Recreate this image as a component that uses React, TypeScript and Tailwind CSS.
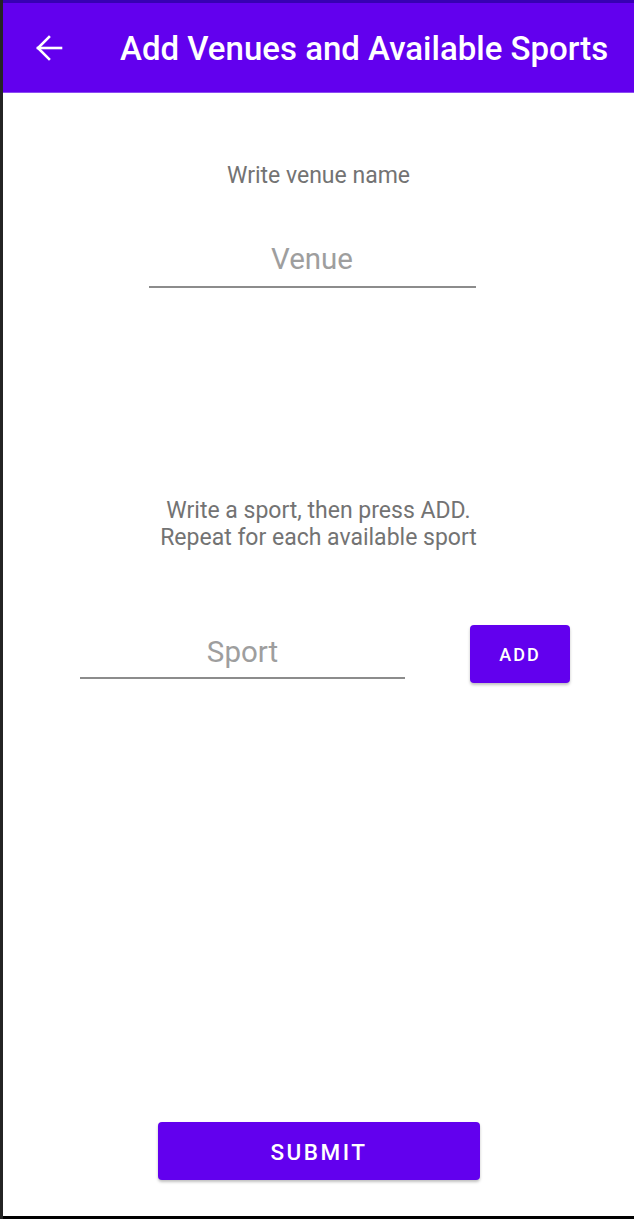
export default function App() {
  return (
    <div
      className="flex w-[634px] h-[1219px] overflow-hidden bg-white"
      style={{ fontFamily: "Roboto, 'Liberation Sans', sans-serif" }}
    >
      {/* left frame edge */}
      <div className="w-[3px] shrink-0 bg-[#242424]" />

      <div className="flex flex-1 flex-col">
        {/* status strip */}
        <div className="h-[3px] bg-[#3700b3]" />

        {/* App bar */}
        <header className="flex h-[90px] items-center bg-[#6200ee] border-b border-[#8b4cf2]">
          <button className="ml-[31px] flex h-[30px] w-[30px] items-center justify-center">
            <svg width="28" height="28" viewBox="0 0 28 28" fill="none" stroke="white" strokeWidth="2.6" strokeLinecap="square">
              <path d="M3 14H26" />
              <path d="M14 3L3 14L14 25" />
            </svg>
          </button>
          <h1 className="ml-[56px] mt-[2px] text-[33px] font-medium leading-none text-white">
            Add Venues and Available Sports
          </h1>
        </header>

        {/* Body */}
        <main className="flex flex-1 flex-col items-center">
          <p className="mt-[69px] text-[23px] leading-[28px] text-[#737373]">Write venue name</p>

          <input
            placeholder="Venue"
            className="mt-[48px] h-[50px] pb-[6px] w-[327px] border-b-2 border-[#8c8c8c] bg-transparent text-center text-[29.5px] text-[#333] placeholder:text-[#9e9e9e] outline-none ml-[-13px]"
          />

          <p className="mt-[209px] text-center text-[23px] leading-[27px] text-[#737373]">
            Write a sport, then press ADD.
            <br />
            Repeat for each available sport
          </p>

          <div className="mt-[74px] flex w-full items-end">
            <input
              placeholder="Sport"
              className="ml-[77px] h-[50px] pb-[2px] w-[325px] border-b-2 border-[#8c8c8c] bg-transparent text-center text-[29.5px] text-[#333] placeholder:text-[#9e9e9e] outline-none"
            />
            <button className="ml-[65px] mb-[-4px] flex h-[58px] w-[100px] items-center justify-center rounded-[4px] bg-[#6200ee] text-[18px] font-medium tracking-[2px] text-white shadow-[0_2px_3px_rgba(0,0,0,0.25)]">
              ADD
            </button>
          </div>

          <div className="flex-1" />

          <button className="mb-[36px] ml-[1px] flex h-[58px] w-[322px] items-center justify-center rounded-[4px] bg-[#6200ee] pt-[3px] text-[22.5px] font-medium tracking-[2.5px] text-white shadow-[0_2px_3px_rgba(0,0,0,0.25)]">
            SUBMIT
          </button>
        </main>

        {/* bottom frame edge */}
        <div className="h-[3px] bg-black" />
      </div>
    </div>
  );
}
